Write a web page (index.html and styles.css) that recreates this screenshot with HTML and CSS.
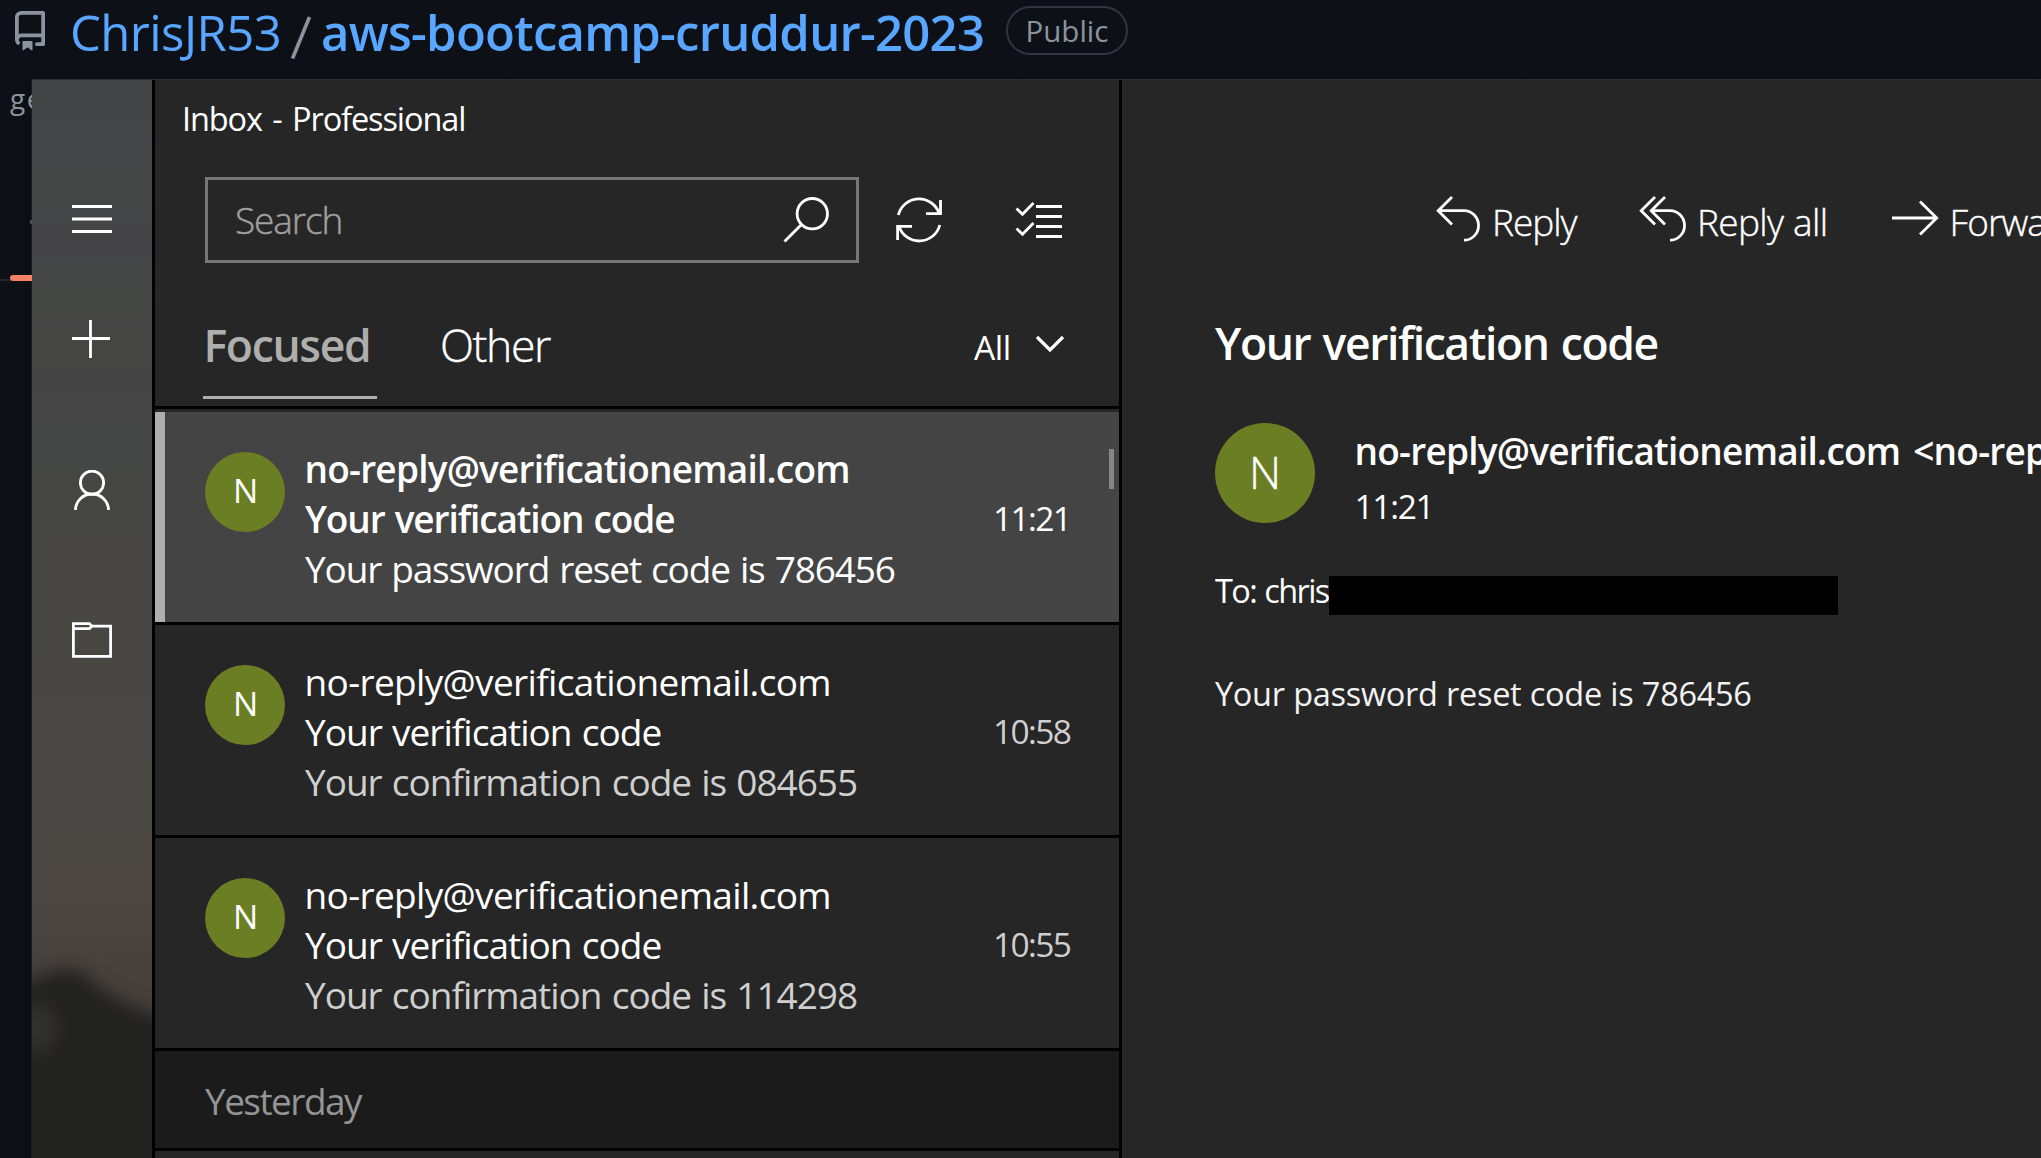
FILE: index.html
```html
<!DOCTYPE html>
<html lang="en">
<head>
<meta charset="utf-8">
<title>Inbox - Professional</title>
<link rel="stylesheet" href="styles.css">
</head>
<body>
<header class="repo">
  <svg class="repo-icon" viewBox="0 0 16 16" width="40" height="40"><path fill="currentColor" d="M2 2.5A2.5 2.5 0 0 1 4.5 0h8.75a.75.75 0 0 1 .75.75v12.5a.75.75 0 0 1-.75.75h-2.5a.75.75 0 0 1 0-1.5h1.75v-2h-8a1 1 0 0 0-.714 1.7.75.75 0 1 1-1.072 1.05A2.495 2.495 0 0 1 2 11.5Zm10.5-1h-8a1 1 0 0 0-1 1v6.708A2.486 2.486 0 0 1 4.5 9h8ZM5 12.25a.25.25 0 0 1 .25-.25h3.5a.25.25 0 0 1 .25.25v3.25a.25.25 0 0 1-.4.2l-1.45-1.087a.249.249 0 0 0-.3 0L5.4 15.7a.25.25 0 0 1-.4-.2Z"/></svg>
  <span class="owner">ChrisJR53</span>
  <svg class="slash" viewBox="0 0 22 44" width="22" height="44"><path d="M19.5 1 2.5 42.5" stroke="currentColor" stroke-width="3.6"/></svg>
  <span class="name">aws-bootcamp-cruddur-2023</span>
  <span class="badge">Public</span>
</header>
<div class="below">
  <aside class="behind">
    <div class="forked">ge</div>
    <div class="tab-dot"></div>
    <div class="tab-line"><div class="tab-active"></div></div>
  </aside>
  <main class="window">
    <nav class="rail">
      <svg class="rail-bg" viewBox="0 0 120 1078" width="120" height="1078">
        <defs>
          <linearGradient id="sky" x1="0" y1="0" x2="0" y2="1">
            <stop offset="0" stop-color="#434446"/><stop offset=".1" stop-color="#444545"/><stop offset=".16" stop-color="#444446"/><stop offset=".2" stop-color="#444644"/><stop offset=".28" stop-color="#454444"/><stop offset=".34" stop-color="#444645"/><stop offset=".45" stop-color="#474643"/><stop offset=".6" stop-color="#494643"/><stop offset=".76" stop-color="#4b4642"/><stop offset=".86" stop-color="#463f3b"/><stop offset="1" stop-color="#463f3b"/>
          </linearGradient>
          <filter id="soft" x="-60%" y="-60%" width="220%" height="220%" color-interpolation-filters="sRGB"><feGaussianBlur stdDeviation="9"/></filter>
        </defs>
        <rect width="120" height="1078" fill="url(#sky)"/>
        <path filter="url(#soft)" fill="#222220" d="M-40 912 5 898 30 888 50 892 70 910 95 924 130 938 160 945V1130H-40Z"/>
        <ellipse filter="url(#soft)" cx="6" cy="948" rx="20" ry="24" fill="#343230"/>
      </svg>
      <svg class="ic menu" viewBox="0 0 40 40"><path d="M0 6.5h40M0 19h40M0 31.5h40"/></svg>
      <svg class="ic add" viewBox="0 0 40 40"><path d="M0 19.5h38M18.5 1v38"/></svg>
      <svg class="ic person" viewBox="0 0 40 40"><circle cx="20" cy="12.7" r="11.6"/><path d="M3.5 40a16.5 16 0 0 1 33 0"/></svg>
      <svg class="ic folder" viewBox="0 0 40 40"><path d="M1.4 3.6h16l2.6 2.6h18.6v30.2H1.4zM1.4 8.6h16l2.6-2.4"/></svg>
    </nav>
    <section class="list">
      <h1 class="title">Inbox - Professional</h1>
      <div class="tools">
        <div class="search"><span>Search</span>
          <svg class="ic" viewBox="0 0 48 48" width="48" height="48"><circle cx="29.3" cy="17.7" r="15.2"/><path d="M18.5 28.5 1.5 45.5"/></svg>
        </div>
        <svg class="ic refresh" viewBox="0 0 48 48" width="48" height="48"><path d="M3.3 19A21.3 21.3 0 0 1 44 17M45.5 4v13.6H31M44.8 29A21.3 21.3 0 0 1 4 30.5M2.6 44V30.4H17"/></svg>
        <svg class="ic checks" viewBox="0 0 48 40" width="48" height="40"><path d="M21 6.5h26M21 16.5h26M21 26.5h26M21 36.5h26M1.5 8.5l6 5.7L18.5 3M1.5 28.5l6 5.7L18.5 23"/></svg>
      </div>
      <div class="tabs">
        <div class="tab focused">Focused</div>
        <div class="tab other">Other</div>
        <div class="filter">All</div>
        <svg class="ic chev" viewBox="0 0 30 18" width="30" height="18"><path stroke-width="3.2" d="M2 2 15 15 28 2"/></svg>
      </div>
      <article class="mail selected">
        <div class="avatar">N</div>
        <div class="lines"><div class="from">no-reply@verificationemail.com</div><div class="subject">Your verification code</div><div class="preview">Your password reset code is 786456</div></div>
        <time>11:21</time>
        <div class="thumb"></div>
      </article>
      <article class="mail">
        <div class="avatar">N</div>
        <div class="lines"><div class="from">no-reply@verificationemail.com</div><div class="subject">Your verification code</div><div class="preview">Your confirmation code is 084655</div></div>
        <time>10:58</time>
      </article>
      <article class="mail">
        <div class="avatar">N</div>
        <div class="lines"><div class="from">no-reply@verificationemail.com</div><div class="subject">Your verification code</div><div class="preview">Your confirmation code is 114298</div></div>
        <time>10:55</time>
      </article>
      <div class="group">Yesterday</div>
    </section>
    <section class="reader">
      <div class="actions">
        <svg class="ic" viewBox="0 0 46 46" width="46" height="46"><path d="M16 1 2.2 14.7 16 28.4M2.2 14.7H28a14.5 14.7 0 0 1 0 29.5"/></svg><span class="reply">Reply</span>
        <svg class="ic" viewBox="0 0 48 46" width="48" height="46"><path d="M16 1 2.2 14.7 16 28.4M26 1 12.2 14.7 26 28.4M12.2 14.7H31a14.5 14.7 0 0 1 0 29.5"/></svg><span class="reply-all">Reply all</span>
        <svg class="ic" viewBox="0 0 48 46" width="48" height="46"><path d="M0 22h45M28 5.5l16.7 16.5L28 38.5"/></svg><span class="forward">Forward</span>
      </div>
      <h2 class="heading">Your verification code</h2>
      <div class="sender">
        <div class="avatar big">N</div>
        <div class="who"><div class="address">no-reply@verificationemail.com &lt;no-reply@verificationemail.com&gt;</div><div class="when">11:21</div></div>
      </div>
      <div class="to"><span>To: chris</span><div class="redacted"></div></div>
      <p class="body">Your password reset code is 786456</p>
    </section>
  </main>
</div>
</body>
</html>
```
FILE: styles.css
```css
* { box-sizing: border-box; }
body {
  margin: 0; width: 2041px; height: 1158px; overflow: hidden;
  background: #0d1117; color: #fff;
  font-family: "Open Sans", "Noto Sans", sans-serif; font-size: 37px;
}
h1, h2, p { margin: 0; font-weight: 400; }
svg { display: block; flex: none; }
span, time { white-space: nowrap; }
.ic { fill: none; stroke: #fff; stroke-width: 2.8; }

.repo {
  height: 79px; padding: 2px 0 0 10px; display: flex; align-items: flex-start;
  font-size: 49px; line-height: 60px; color: #58a6ff;
  background: linear-gradient(#0d1117 65px, #0c0f13 79px);
}
.repo-icon { color: #8b949e; margin-top: 9px; }
.owner { width: 220px; margin-left: 20px; letter-spacing: -.55px; }
.slash { color: #8b949e; margin: 14px 0 0 0; }
.name { width: 674px; margin-left: 9px; font-weight: 600; letter-spacing: -.72px; }
.badge {
  width: 122px; height: 49px; margin: 4px 0 0 11px; border: 2px solid #30363d; border-radius: 25px;
  font-size: 29.5px; line-height: 46px; text-align: center; font-weight: 500; color: #8b949e;
}

.below { display: flex; height: 1079px; }
.behind { width: 32px; flex: none; overflow: hidden; background: linear-gradient(90deg, #0d1117 8px, #0c0f12 31px, #1b1e20 31px); }
.forked { height: 141px; padding: 3px 0 0 10px; font-size: 28px; line-height: 32px; letter-spacing: 1.5px; color: #8b949e; }
.tab-dot { width: 2px; height: 4px; margin-left: 30px; background: #4b5158; }
.tab-line { height: 6px; margin-top: 51px; background: linear-gradient(transparent 4px, #21262d 4px); }
.tab-active { height: 6px; margin-left: 10px; border-radius: 3px 0 0 3px; background: #f78166; }

.window { flex: 1; min-width: 0; display: flex; border-top: 1px solid #2a2b2b; background: #262626; }
.rail { position: relative; width: 123px; flex: none; padding-left: 40px; border-right: 3px solid #000; overflow: hidden; }
.rail-bg { position: absolute; left: 0; top: 0; }
.rail .ic { position: relative; width: 40px; height: 40px; }
.menu { margin-top: 120px; }
.add { margin-top: 79px; }
.person { margin-top: 111px; }
.folder { margin-top: 110px; }

.list { width: 967px; flex: none; border-right: 3px solid #000; }
.title { height: 97px; padding: 17px 0 0 27px; font-size: 32.5px; line-height: 44px; letter-spacing: -1.1px; word-spacing: 3px; }
.tools { display: flex; padding-left: 50px; }
.search { width: 654px; height: 86px; padding: 0 20px 0 27px; border: 3px solid #767676; display: flex; align-items: center; justify-content: space-between; font-weight: 300; line-height: 48px; letter-spacing: -1.1px; color: #a0a0a0; }
.search .ic { margin-right: 5px; }
.refresh { margin: 19px 0 0 36px; }
.checks { margin: 23px 0 0 72px; }
.tabs { height: 146px; padding: 52px 0 0 48px; display: flex; border-bottom: 3px solid #000; font-size: 44.5px; line-height: 60px; }
.tab { height: 84px; }
.focused { width: 174px; padding-left: .5px; font-weight: 600; letter-spacing: -1.34px; color: #aeaeae; border-bottom: 3px solid #aeaeae; }
.other { width: 160px; margin-left: 63px; font-weight: 300; letter-spacing: -1.4px; }
.filter { width: 40px; margin-left: 374px; font-size: 33.5px; line-height: 65px; letter-spacing: -.47px; }
.chev { margin: 20px 0 0 21px; }
/* semilight: the light cut with slightly thickened stems */
.search, .other, .actions, .big { -webkit-text-stroke: .4px currentColor; }

.mail { position: relative; display: flex; height: 213px; padding-left: 50px; border-bottom: 3px solid #000; }
.selected { height: 216px; border-top: 3px solid #262626; background: linear-gradient(90deg, #aeaeae 10px, #444 10px); }
.avatar { width: 80px; height: 80px; flex: none; margin-top: 40px; border-radius: 50%; background: #6b7e23; font-size: 33.5px; line-height: 77px; padding-left: 1px; text-align: center; }
.lines { width: 688px; margin-left: 20px; padding-top: 32px; line-height: 50px; white-space: nowrap; }
.from { margin-left: -.5px; letter-spacing: -.65px; }
.subject { letter-spacing: -.98px; word-spacing: 1.6px; }
.preview { letter-spacing: -1.02px; word-spacing: 1.6px; color: #cfcfcf; }
.selected .from { font-weight: 600; letter-spacing: -.78px; }
.selected .subject { font-weight: 600; letter-spacing: -1.1px; }
.selected .preview { letter-spacing: -1.15px; color: #fff; }
time { font-size: 33.5px; line-height: 212px; letter-spacing: -1.65px; color: #cfcfcf; }
.selected time { color: #fff; }
.thumb { position: absolute; right: 5px; top: 37px; width: 5px; height: 40px; background: #868686; }
.group { height: 100px; padding-left: 50px; border-bottom: 3px solid #000; background: #1b1b1b; line-height: 100px; letter-spacing: -1.55px; color: #949494; }

.reader { flex: 1; min-width: 0; padding-left: 93px; overflow: hidden; }
.actions { display: flex; margin: 116px 0 0 221px; font-weight: 300; line-height: 52px; }
.actions span { flex: none; padding-left: 10px; }
.reply { width: 157px; letter-spacing: -1.05px; }
.reply-all { width: 204.5px; letter-spacing: -.7px; word-spacing: 1px; }
.forward { letter-spacing: -.9px; }
.heading { margin-top: 65px; font-size: 44.5px; font-weight: 600; line-height: 60px; letter-spacing: -1.4px; word-spacing: 2px; }
.sender { display: flex; height: 143px; padding-top: 50px; }
.big { width: 100px; height: 100px; margin: 0; padding: 0; font-size: 44.5px; font-weight: 300; line-height: 97px; }
.who { margin-left: 39.5px; padding-top: 3px; white-space: nowrap; line-height: 50px; }
.address { letter-spacing: -.76px; word-spacing: 4px; font-weight: 600; }
.when { margin-top: 5px; font-size: 33.5px; letter-spacing: -1.3px; }
.to { display: flex; padding-top: 60px; font-size: 32.5px; line-height: 30px; letter-spacing: -1.65px; word-spacing: 1.5px; }
.to span { width: 114px; }
.redacted { width: 509px; height: 39px; background: #000; }
.body { margin-top: 54px; font-size: 32.5px; line-height: 50px; letter-spacing: -.3px; word-spacing: .3px; color: #f2f2f2; }
```
